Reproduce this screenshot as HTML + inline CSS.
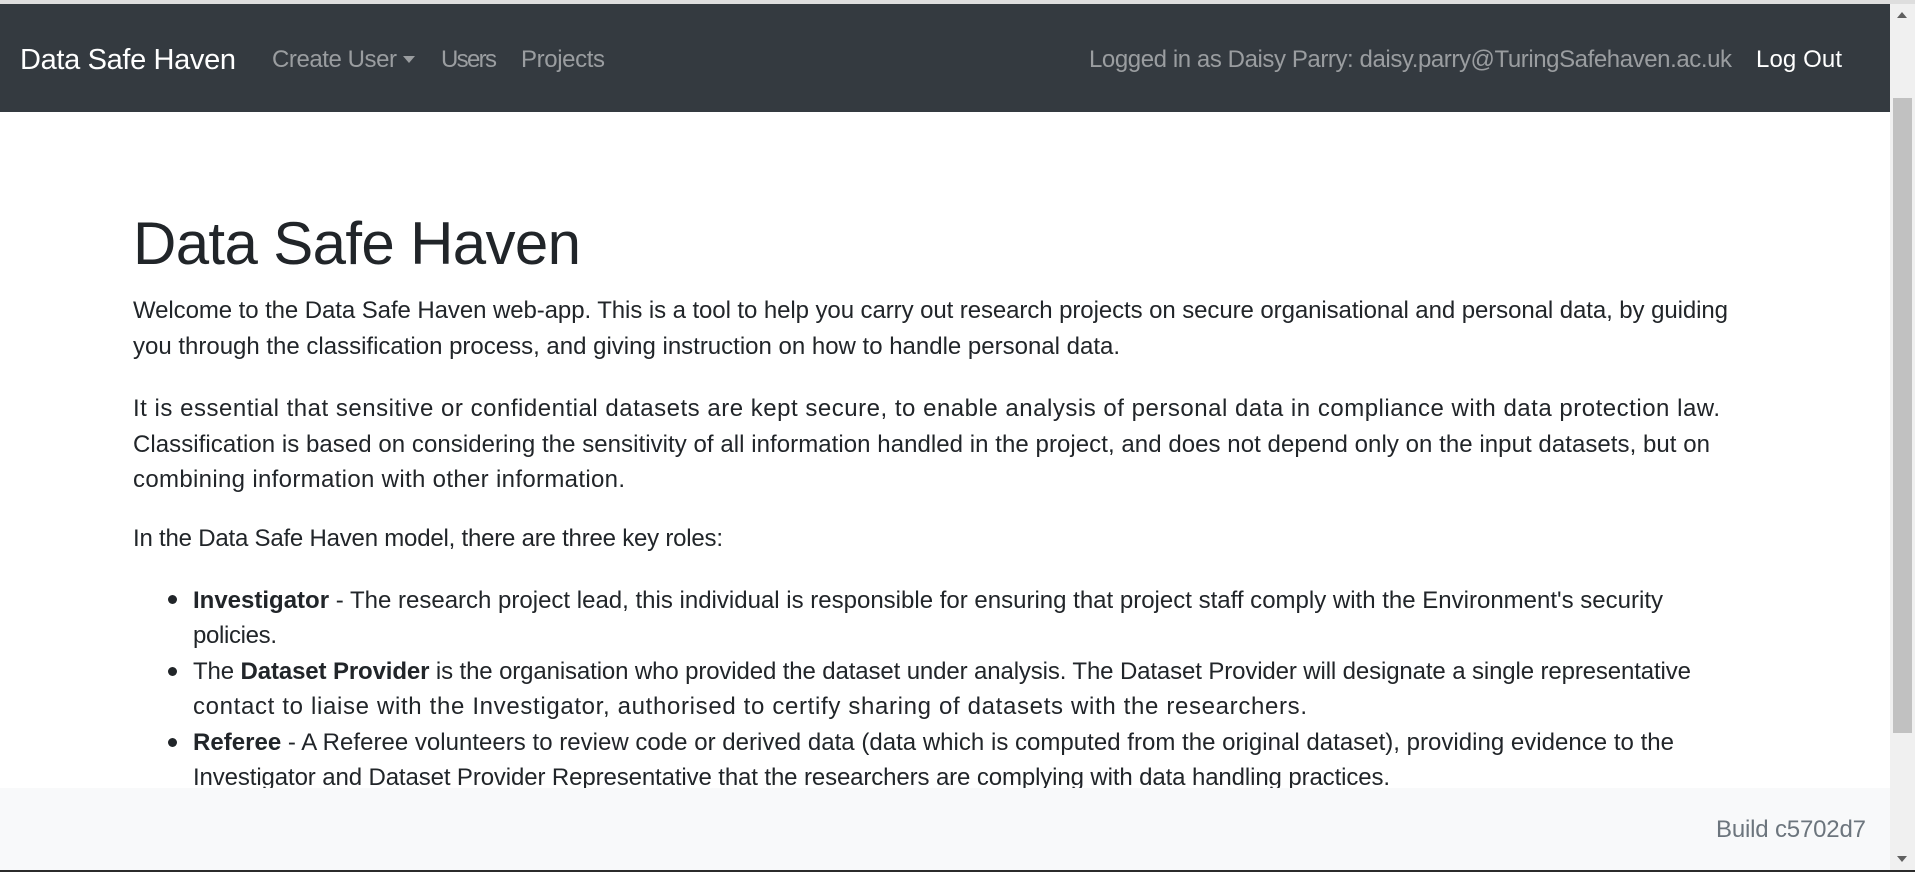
<!DOCTYPE html>
<html><head><meta charset="utf-8"><style>
html,body{margin:0;padding:0;width:1915px;height:872px;overflow:hidden;background:#fff;font-family:"Liberation Sans",sans-serif;}
.a{position:absolute;white-space:nowrap;}
#top{position:absolute;left:0;top:0;width:1915px;height:4px;background:#dedede}
#nav{position:absolute;left:0;top:4px;width:1890px;height:108px;background:#343a40}
.nv{font-size:24px;line-height:36px;top:42px;color:#9a9da0}
.t{font-size:24px;line-height:36px;color:#212529}
b{font-weight:bold}
.bul{position:absolute;width:9px;height:9px;border-radius:50%;background:#212529;left:168px}
#foot{position:absolute;left:0;top:788px;width:1890px;height:82px;background:#f8f9fa}
#sb{position:absolute;left:1890px;top:4px;width:25px;height:866px;background:#f0f0f0}
#thumb{position:absolute;left:1893px;top:98px;width:19px;height:635px;background:#c1c1c1}
#bot{position:absolute;left:0;top:870px;width:1915px;height:2px;background:#2b2b2b}
</style></head><body>
<div id="top"></div>
<div id="nav"></div>
<div class="a" data-w="216" style="left:20px;top:41px;font-size:29px;line-height:38px;color:#fff">Data Safe Haven</div>
<div class="a nv" data-w="125" style="left:272px">Create User</div>
<div class="a" style="left:403px;top:56px;width:0;height:0;border-left:6px solid transparent;border-right:6px solid transparent;border-top:7px solid #9a9da0"></div>
<div class="a nv" data-w="56" style="left:441px">Users</div>
<div class="a nv" data-w="84" style="left:521px">Projects</div>
<div class="a nv" data-w="643" style="left:1089px">Logged in as Daisy Parry: daisy.parry@TuringSafehaven.ac.uk</div>
<div class="a nv" data-w="86" style="left:1756px;color:#fff">Log Out</div>

<div class="a" data-w="448" style="left:133px;top:208px;font-size:60px;line-height:72px;color:#212529;font-weight:500">Data Safe Haven</div>

<div class="a t" data-w="1595" style="left:133px;top:293px">Welcome to the Data Safe Haven web-app. This is a tool to help you carry out research projects on secure organisational and personal data, by guiding</div>
<div class="a t" data-w="987" style="left:133px;top:329px">you through the classification process, and giving instruction on how to handle personal data.</div>
<div class="a t" data-w="1587" style="left:133px;top:391px">It is essential that sensitive or confidential datasets are kept secure, to enable analysis of personal data in compliance with data protection law.</div>
<div class="a t" data-w="1577" style="left:133px;top:427px">Classification is based on considering the sensitivity of all information handled in the project, and does not depend only on the input datasets, but on</div>
<div class="a t" data-w="492" style="left:133px;top:462px">combining information with other information.</div>
<div class="a t" data-w="590" style="left:133px;top:521px">In the Data Safe Haven model, there are three key roles:</div>

<div class="bul" style="top:595px"></div>
<div class="a t" data-w="1470" style="left:193px;top:583px"><b>Investigator</b> - The research project lead, this individual is responsible for ensuring that project staff comply with the Environment's security</div>
<div class="a t" data-w="84" style="left:193px;top:618px">policies.</div>
<div class="bul" style="top:667px"></div>
<div class="a t" data-w="1498" style="left:193px;top:654px">The <b>Dataset Provider</b> is the organisation who provided the dataset under analysis. The Dataset Provider will designate a single representative</div>
<div class="a t" data-w="1114" style="left:193px;top:689px">contact to liaise with the Investigator, authorised to certify sharing of datasets with the researchers.</div>
<div class="bul" style="top:738px"></div>
<div class="a t" data-w="1481" style="left:193px;top:725px"><b>Referee</b> - A Referee volunteers to review code or derived data (data which is computed from the original dataset), providing evidence to the</div>
<div class="a t" data-w="1197" style="left:193px;top:760px">Investigator and Dataset Provider Representative that the researchers are complying with data handling practices.</div>

<div id="foot"></div>
<div class="a" data-w="150" style="left:1716px;top:812px;font-size:24px;line-height:36px;color:#6c757d">Build c5702d7</div>
<div id="sb"></div>
<div id="thumb"></div>
<div class="a" style="left:1897px;top:12px;width:0;height:0;border-left:5px solid transparent;border-right:5px solid transparent;border-bottom:6px solid #606060"></div>
<div class="a" style="left:1897px;top:856px;width:0;height:0;border-left:5px solid transparent;border-right:5px solid transparent;border-top:6px solid #606060"></div>
<div id="bot"></div>
<script>
document.querySelectorAll('[data-w]').forEach(function(e){
  var t=+e.getAttribute('data-w');var w=e.getBoundingClientRect().width;
  var n=e.textContent.length-1;if(n>0){e.style.letterSpacing=((t-w)/n)+'px';}
});
</script>
</body></html>
